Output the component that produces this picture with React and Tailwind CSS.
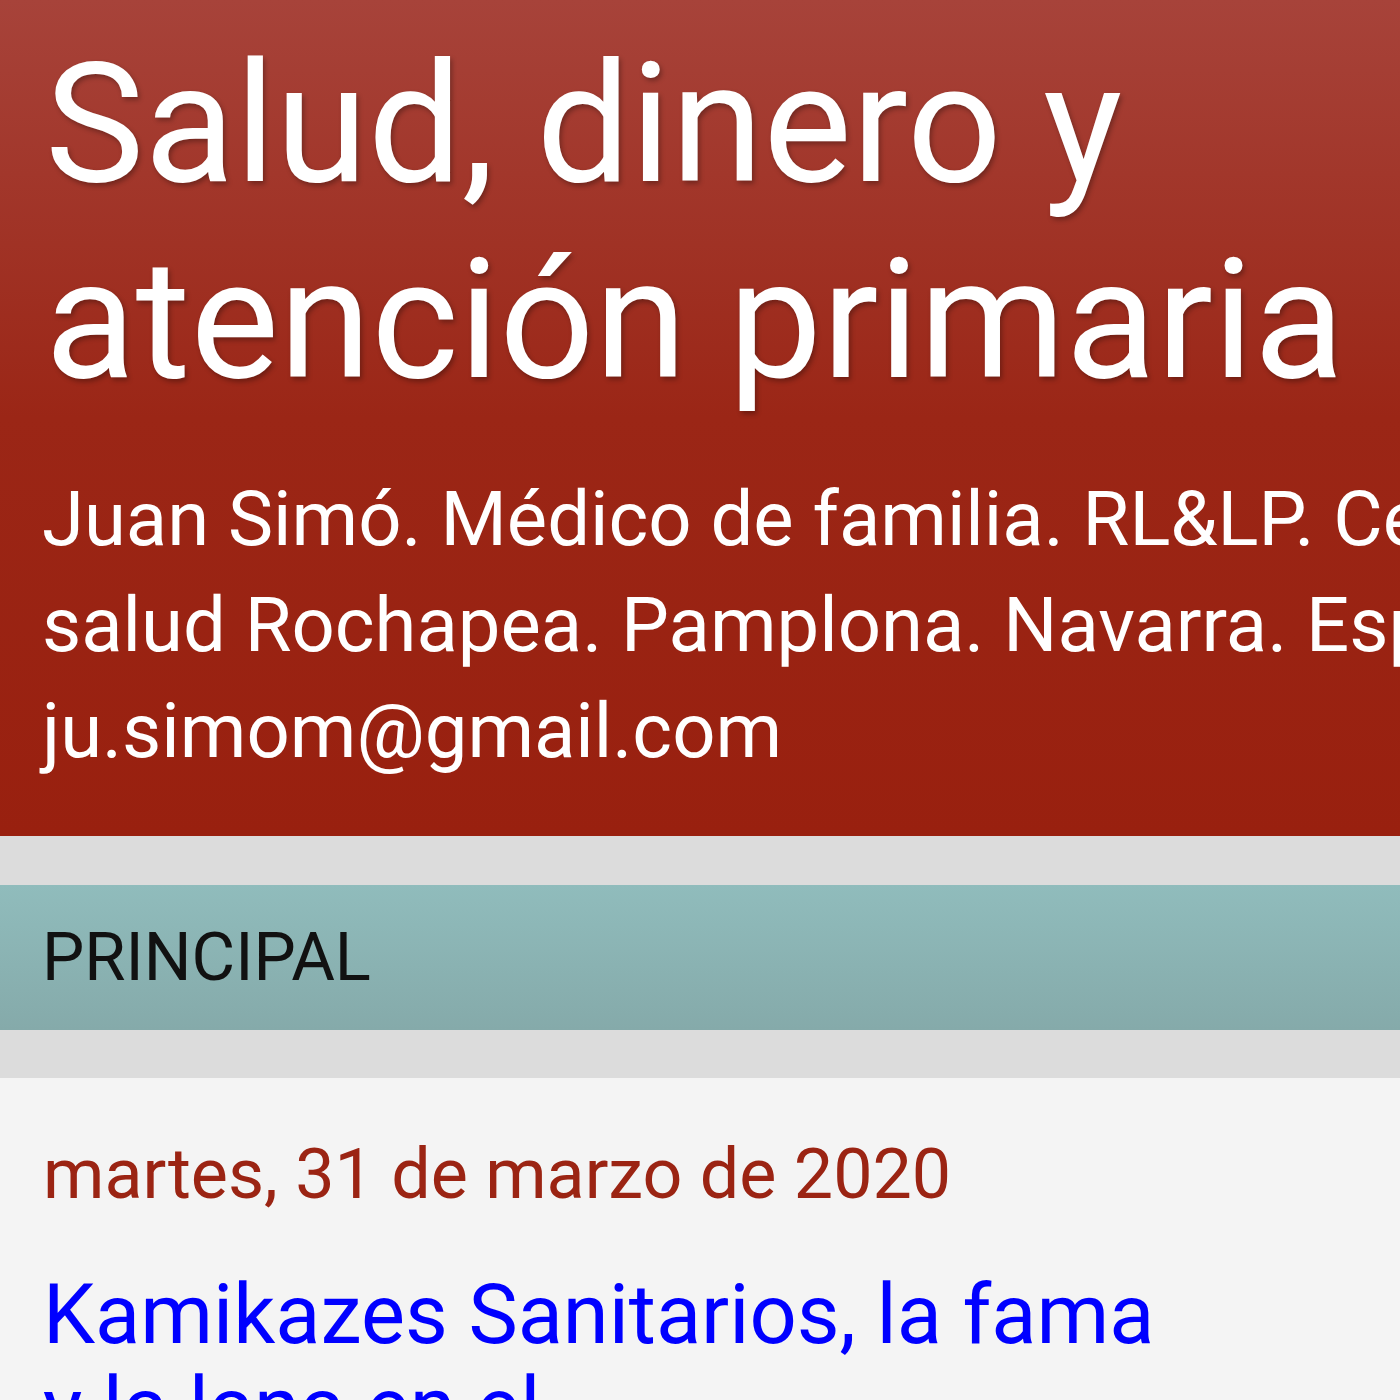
export default function App() {
  return (
    <div className="w-[1400px] h-[1400px] overflow-hidden bg-[#f4f4f4]" style={{ fontFamily: "Roboto, 'Liberation Sans', sans-serif" }}>
      {/* cabecera */}
      <header className="bg-[linear-gradient(180deg,#a7433a_0%,#9b2616_50%,#99200f_100%)] pt-[26px] pb-[52px] pl-[45px] text-white">
        <h1 className="text-[167px] leading-[196px] font-normal whitespace-nowrap [text-shadow:2px_3px_5px_rgba(0,0,0,0.3)]">
          Salud, dinero y
          <br />
          atención primaria
        </h1>
        <div className="mt-[48px] -ml-[3px] text-[76px] leading-[106px] whitespace-nowrap">
          <p>Juan Simó. Médico de familia. RL&amp;LP. Centro de</p>
          <p>salud Rochapea. Pamplona. Navarra. España.</p>
          <p>ju.simom@gmail.com</p>
        </div>
      </header>

      <div className="h-[49px] bg-[#dcdcdc]" />

      <nav className="h-[145px] flex items-center pl-[42px] bg-[linear-gradient(180deg,#90bcbc,#85aaaa)] text-[67px] text-[#111]">
        PRINCIPAL
      </nav>

      <div className="h-[48px] bg-[#dcdcdc]" />

      <main className="pt-[53px] pl-[43px]">
        <p className="text-[70px] leading-[86px] text-[#9b2413] whitespace-nowrap">martes, 31 de marzo de 2020</p>
        <h2 className="mt-[51px] text-[83px] leading-[93px] text-[#0000ff] whitespace-nowrap">
          Kamikazes Sanitarios, la fama
          <br />
          y la lana en el
        </h2>
      </main>
    </div>
  );
}
